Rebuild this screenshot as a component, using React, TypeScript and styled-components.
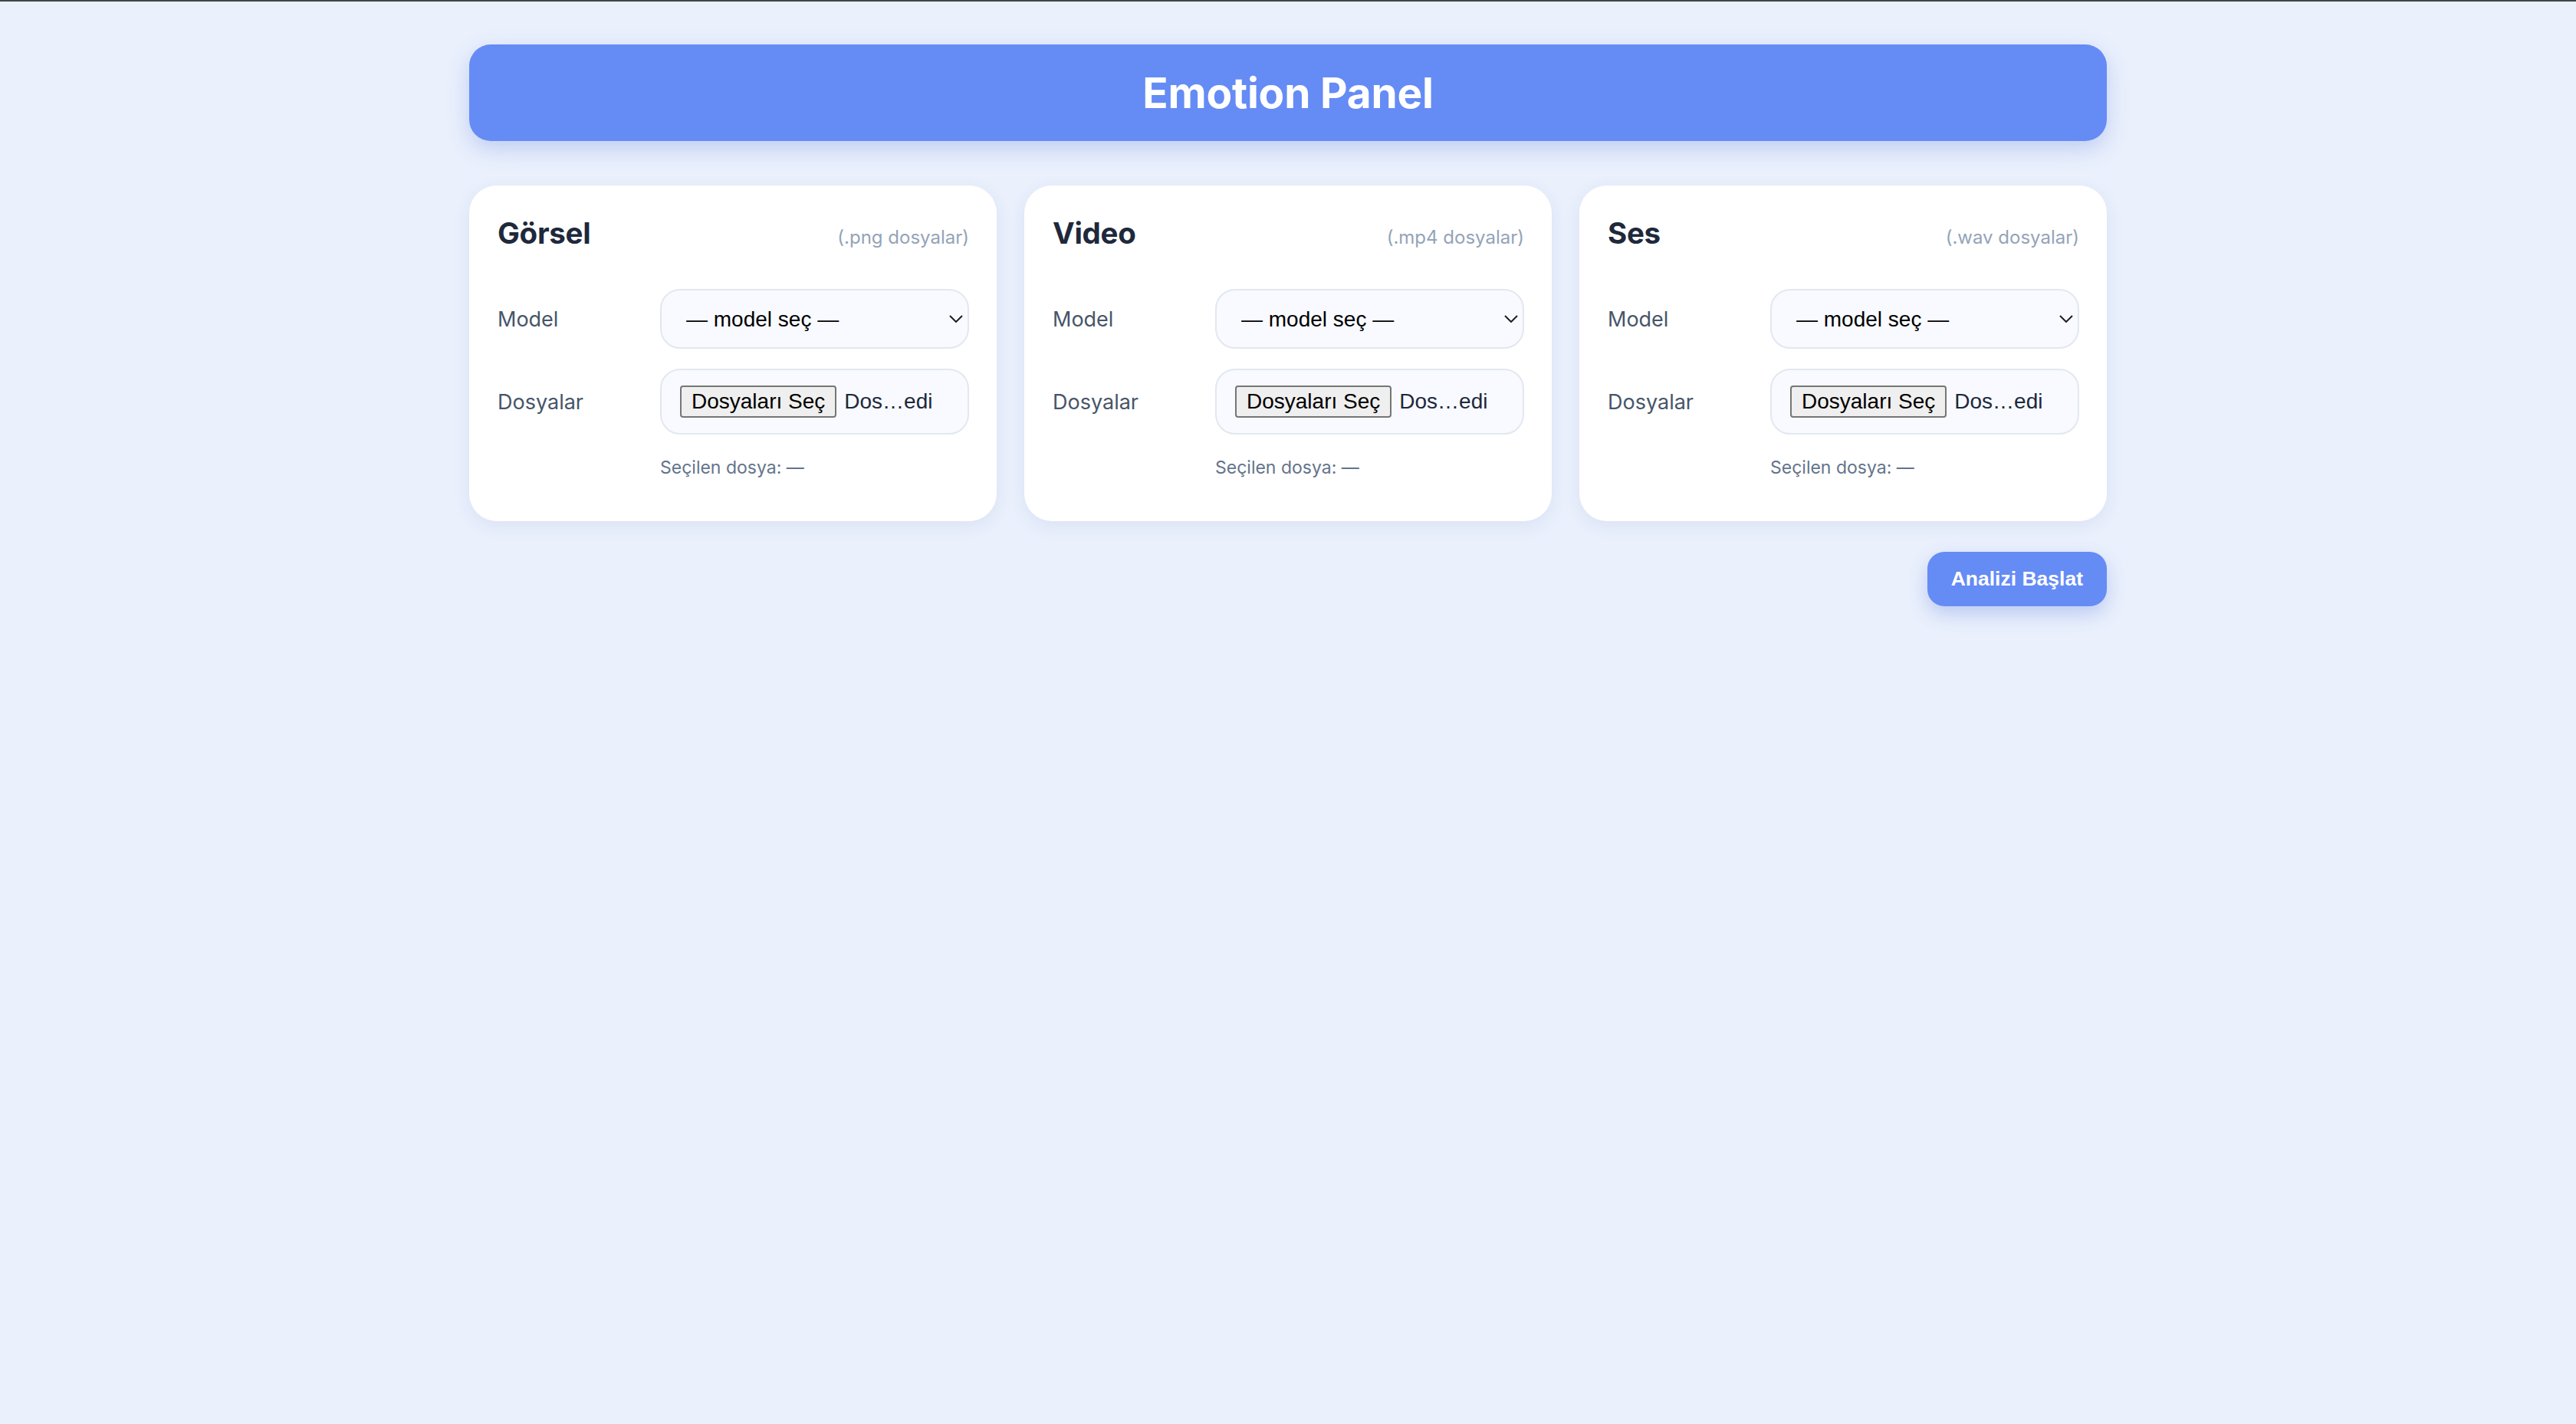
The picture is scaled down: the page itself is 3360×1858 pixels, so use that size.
import React from "react";
import styled, { createGlobalStyle } from "styled-components";

const GlobalStyle = createGlobalStyle`
  html, body {
    margin: 0;
    padding: 0;
    background: #eaf0fc;
    font-family: Inter, "Noto Sans", "Liberation Sans", sans-serif;
  }
  body { border-top: 2px solid #3e484a; min-height: 1856px; }
  * { box-sizing: border-box; }
`;

const Page = styled.main`
  width: 2136px;
  margin: 0 auto;
  padding-top: 56px;
  display: flex;
  flex-direction: column;
`;

const Header = styled.header`
  height: 126px;
  border-radius: 28px;
  background: #658bf5;
  box-shadow: 0 10px 28px rgba(80, 115, 220, 0.28);
  display: flex;
  align-items: center;
  justify-content: center;
`;

const HeaderTitle = styled.h1`
  margin: 0;
  color: #ffffff;
  font-family: Inter, sans-serif;
  font-weight: 700;
  font-size: 55px;
  letter-spacing: -0.2px;
`;

const CardGrid = styled.section`
  margin-top: 58px;
  display: grid;
  grid-template-columns: repeat(3, 1fr);
  gap: 36px;
`;

const Card = styled.div`
  background: #ffffff;
  border-radius: 36px;
  padding: 39px 36px 54px 37px;
  box-shadow: 0 6px 22px rgba(60, 90, 170, 0.09);
`;

const TitleRow = styled.div`
  display: flex;
  justify-content: space-between;
  align-items: baseline;
  margin-bottom: 50px;
`;

const CardTitle = styled.h2`
  margin: 0;
  font-family: Inter, sans-serif;
  font-weight: 700;
  font-size: 38.5px;
  line-height: 46px;
  color: #1e293b;
  letter-spacing: -0.3px;
`;

const CardHint = styled.span`
  font-family: Inter, sans-serif;
  font-size: 24px;
  color: #94a3b8;
`;

const FormGrid = styled.div`
  display: grid;
  grid-template-columns: 212px 1fr;
  row-gap: 26px;
  align-items: center;
`;

const Label = styled.label`
  font-family: Inter, sans-serif;
  font-size: 27px;
  color: #475569;
`;

const SelectWrap = styled.div`
  position: relative;
`;

const Select = styled.select`
  appearance: none;
  -webkit-appearance: none;
  width: 100%;
  height: 78px;
  border: 2px solid #e2e8f0;
  border-radius: 26px;
  background: #f8faff;
  padding: 0 40px 0 32px;
  font-family: "Liberation Sans", Arial, sans-serif;
  font-size: 28px;
  color: #000000;
  outline: none;
`;

const Chevron = styled.svg`
  position: absolute;
  right: 8px;
  top: 34px;
  width: 18px;
  height: 10px;
  pointer-events: none;
`;

const FileBox = styled.div`
  height: 86px;
  border: 2px solid #e2e8f0;
  border-radius: 26px;
  background: #f8faff;
  padding: 0 24px;
  display: flex;
  align-items: center;
  gap: 10px;
`;

const FileButton = styled.button`
  height: 42px;
  padding: 0 13px;
  border: 2px solid #767676;
  border-radius: 4px;
  background: #efefef;
  font-family: "Liberation Sans", Arial, sans-serif;
  font-size: 28px;
  color: #000000;
  line-height: 1;
`;

const FileName = styled.span`
  font-family: "Liberation Sans", Arial, sans-serif;
  font-size: 28px;
  color: #1e293b;
`;

const Selected = styled.div`
  grid-column: 2;
  margin-top: 1px;
  font-family: Inter, sans-serif;
  font-size: 23px;
  line-height: 32px;
  color: #64748b;
`;

const Actions = styled.div`
  margin-top: 40px;
  display: flex;
  justify-content: flex-end;
`;

const StartButton = styled.button`
  height: 71px;
  padding: 0 31px;
  border: none;
  border-radius: 22px;
  background: #658bf5;
  color: #ffffff;
  font-family: "Liberation Sans", Arial, sans-serif;
  font-weight: 700;
  font-size: 26.5px;
  box-shadow: 0 10px 24px rgba(80, 115, 220, 0.3);
`;

type Panel = { title: string; ext: string };

const panels: Panel[] = [
  { title: "Görsel", ext: "(.png dosyalar)" },
  { title: "Video", ext: "(.mp4 dosyalar)" },
  { title: "Ses", ext: "(.wav dosyalar)" },
];

function PanelCard({ title, ext }: Panel) {
  return (
    <Card>
      <TitleRow>
        <CardTitle>{title}</CardTitle>
        <CardHint>{ext}</CardHint>
      </TitleRow>
      <FormGrid>
        <Label>Model</Label>
        <SelectWrap>
          <Select defaultValue="">
            <option value="">— model seç —</option>
          </Select>
          <Chevron viewBox="0 0 18 10">
            <path d="M1 1 L9 9 L17 1" fill="none" stroke="#1f1f1f" strokeWidth="2" />
          </Chevron>
        </SelectWrap>
        <Label>Dosyalar</Label>
        <FileBox>
          <FileButton type="button">Dosyaları Seç</FileButton>
          <FileName>Dos…edi</FileName>
        </FileBox>
        <Selected>Seçilen dosya: —</Selected>
      </FormGrid>
    </Card>
  );
}

export default function App() {
  return (
    <>
      <GlobalStyle />
      <Page>
        <Header>
          <HeaderTitle>Emotion Panel</HeaderTitle>
        </Header>
        <CardGrid>
          {panels.map((p) => (
            <PanelCard key={p.title} {...p} />
          ))}
        </CardGrid>
        <Actions>
          <StartButton type="button">Analizi Başlat</StartButton>
        </Actions>
      </Page>
    </>
  );
}
